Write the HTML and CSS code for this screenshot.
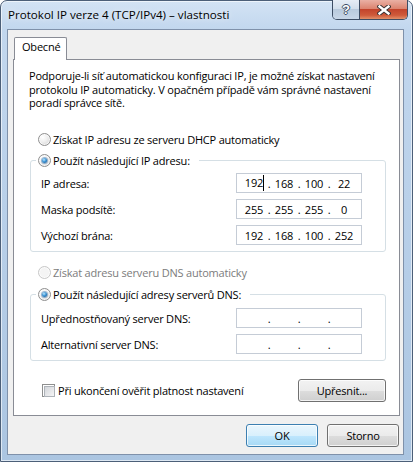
FILE: index.html
```html
<!DOCTYPE html>
<html lang="cs">
<head>
    <meta charset="UTF-8">
    <title>Protokol IP verze 4 (TCP/IPv4) – vlastnosti</title>
    <link rel="stylesheet" href="styles.css">
</head>
<body>
    <div class="window">
        <div class="titlebar">
            <span class="title">Protokol IP verze 4 (TCP/IPv4) – vlastnosti</span>
            <div class="caption">
                <button class="cap help">?</button>
                <button class="cap close">
                    <svg width="14" height="10" viewBox="0 0 14 10">
                        <path d="M2.5 1.5 L11.5 8.5 M11.5 1.5 L2.5 8.5" stroke="#3c3434" stroke-width="4.4" stroke-linecap="square"/>
                        <path d="M2.5 1.5 L11.5 8.5 M11.5 1.5 L2.5 8.5" stroke="#fff" stroke-width="2.4" stroke-linecap="square"/>
                    </svg>
                </button>
            </div>
        </div>

        <div class="client">
            <div class="tab">Obecné</div>
            <div class="panel">
                <p class="intro">Podporuje-li síť automatickou konfiguraci IP, je možné získat nastavení<br>protokolu IP automaticky. V opačném případě vám správné nastavení<br>poradí správce sítě.</p>

                <div class="option"><span class="radio"></span>Získat IP adresu ze serveru DHCP automaticky</div>

                <fieldset class="group">
                    <legend class="option"><span class="radio on"></span>Použít následující IP adresu:</legend>
                    <div class="field">
                        <span class="label">IP adresa:</span>
                        <div class="ipbox"><span>192<i class="caret"></i></span><b>.</b><span>168</span><b>.</b><span>100</span><b>.</b><span>22</span></div>
                    </div>
                    <div class="field">
                        <span class="label">Maska podsítě:</span>
                        <div class="ipbox"><span>255</span><b>.</b><span>255</span><b>.</b><span>255</span><b>.</b><span>0</span></div>
                    </div>
                    <div class="field">
                        <span class="label">Výchozí brána:</span>
                        <div class="ipbox"><span>192</span><b>.</b><span>168</span><b>.</b><span>100</span><b>.</b><span>252</span></div>
                    </div>
                </fieldset>

                <div class="option disabled"><span class="radio"></span>Získat adresu serveru DNS automaticky</div>

                <fieldset class="group dns">
                    <legend class="option"><span class="radio on"></span>Použít následující adresy serverů DNS:</legend>
                    <div class="field">
                        <span class="label">Upřednostňovaný server DNS:</span>
                        <div class="ipbox"><span></span><b>.</b><span></span><b>.</b><span></span><b>.</b><span></span></div>
                    </div>
                    <div class="field">
                        <span class="label">Alternativní server DNS:</span>
                        <div class="ipbox"><span></span><b>.</b><span></span><b>.</b><span></span><b>.</b><span></span></div>
                    </div>
                </fieldset>

                <div class="footer-row">
                    <div class="check"><span class="checkbox"></span>Při ukončení ověřit platnost nastavení</div>
                    <button class="btn wide">Upřesnit...</button>
                </div>
            </div>

            <div class="actions">
                <button class="btn default">OK</button>
                <button class="btn">Storno</button>
            </div>
        </div>
    </div>
</body>
</html>
```

FILE: styles.css
```css
* { box-sizing: border-box; }
body { margin: 0; background: #fff; color: #000; font-family: "Segoe UI", "Open Sans", sans-serif; font-size: 11px; letter-spacing: -0.2px; }

/* window frame */
.window {
    width: 413px;
    height: 462px;
    border: 1px solid #4c5f78;
    border-radius: 7px 7px 0 0;
    background: linear-gradient(180deg, #d3e3f4 0, #c2d7ee 28px, #b5cde7 60%, #abc5e1 100%);
    box-shadow: inset 0 0 0 1px rgba(255, 255, 255, 0.6);
    padding: 0 8px 6px 6px;
    display: flex;
    flex-direction: column;
}
.titlebar { height: 28px; display: flex; justify-content: space-between; align-items: flex-start; margin-right: -4px; }
.title { line-height: 28px; padding-left: 1px; font-size: 11.6px; letter-spacing: 0; text-shadow: 0 0 6px rgba(255, 255, 255, 0.9); }
.caption {
    display: flex;
    margin-top: -1px;
    border: 1px solid #3d4d64;
    border-top: 0;
    border-radius: 0 0 5px 5px;
    overflow: hidden;
}
.cap { border: 0; padding: 0; height: 19px; display: flex; align-items: center; justify-content: center; }
.help {
    width: 27px;
    border-right: 1px solid #3d4d64;
    background: linear-gradient(180deg, #e6edf6 0%, #d3dfec 45%, #b9cadd 50%, #c8d7e8 100%);
    color: #fff;
    font: bold 13px "Liberation Sans", sans-serif;
    text-shadow: 1px 0 #3d4d64, -1px 0 #3d4d64, 0 1px #3d4d64, 0 -1px #3d4d64;
}
.close { width: 47px; background: linear-gradient(180deg, #eab0a4 0%, #dc8470 45%, #c3442c 50%, #cf5a3a 80%, #e2906a 100%); }

.client {
    flex: 1;
    background: #f0f0f0;
    border: 1px solid #7f91aa;
    padding: 7px 0;
    display: flex;
    flex-direction: column;
}

/* tab */
.tab {
    position: relative;
    z-index: 1;
    width: 53px;
    height: 23px;
    margin: 0 0 -1px 6px;
    padding-left: 7px;
    line-height: 18px;
    background: #fff;
    border: 1px solid #898c95;
    border-bottom: 0;
    border-radius: 2px 2px 0 0;
}
.panel { height: 357px; margin: 0 3px 0 5px; border: 1px solid #898c95; background: #fff; }
.intro { margin: 9px 0 21.5px 15px; line-height: 13.5px; }

/* radios / checkbox */
.option { display: flex; align-items: center; gap: 2px; height: 16px; }
.panel > .option { margin-left: 24px; }
.option.disabled { margin-top: 12px; color: #7c7c7c; }
.radio {
    flex: none;
    width: 13px;
    height: 13px;
    border-radius: 50%;
    border: 1px solid #8f8f8f;
    background: radial-gradient(circle at 35% 30%, #fff 0, #f0f0f0 40%, #cdcdcd 100%);
    box-shadow: inset 0 0 0 1px rgba(255, 255, 255, 0.7);
    display: flex;
    align-items: center;
    justify-content: center;
}
.radio.on::after {
    content: "";
    width: 5px;
    height: 5px;
    border-radius: 50%;
    background: radial-gradient(circle at 40% 35%, #bfe8fc 0, #3c94d5 45%, #124d86 100%);
    box-shadow: 0 0 0 1px rgba(40, 100, 160, 0.45);
}
.disabled .radio { border-color: #c8c8c8; background: #f4f4f4; }

.group {
    margin: 5px 13px 0 16px;
    padding: 4px 0 6px 10px;
    border: 1px solid #d5dfe5;
    border-radius: 3px;
    min-width: 0;
}
.group.dns { margin-top: 6px; padding-top: 5px; }
.group legend { height: 17px; margin-left: -5px; padding: 0 9px 0 2px; }

.field { display: flex; align-items: center; height: 20px; }
.field + .field { margin-top: 6px; }
.label { width: 195px; }
.ipbox {
    width: 126px;
    height: 20px;
    border: 1px solid #c5ccd6;
    background: #fff;
    padding-left: 2px;
    display: grid;
    grid-template-columns: 30px 0 30px 0 30px 0 30px;
    align-items: center;
}
.ipbox span { text-align: center; }
.ipbox b { font-weight: normal; display: flex; justify-content: center; }
.caret { display: inline-block; width: 1px; height: 16px; background: #000; vertical-align: -4px; margin-right: -1px; }

.footer-row { display: flex; justify-content: space-between; align-items: center; height: 23px; margin: 18px 13px 0 28px; }
.check { display: flex; align-items: center; gap: 3px; }
.checkbox {
    width: 13px;
    height: 13px;
    border: 1px solid #8e8f8f;
    background: #fff;
    padding: 1px;
}
.checkbox::after {
    content: "";
    display: block;
    width: 9px;
    height: 9px;
    border: 1px solid #aeb3b9;
    background: linear-gradient(135deg, #d3d6db, #f5f5f6);
}

/* buttons */
.btn {
    height: 23px;
    padding: 0;
    border: 1px solid #707070;
    border-radius: 3px;
    background: linear-gradient(180deg, #f2f2f2 0%, #ebebeb 50%, #dddddd 51%, #cfcfcf 100%);
    box-shadow: inset 0 0 0 1px rgba(255, 255, 255, 0.75);
    font: inherit;
    letter-spacing: inherit;
    color: #000;
}
.btn.wide { width: 88px; }
.btn.default {
    border-color: #3c7fb1;
    background: linear-gradient(180deg, #eaf6fd 0%, #d9f0fc 50%, #bee6fd 51%, #a7d9f5 100%);
}
.actions { display: flex; justify-content: flex-end; gap: 9px; margin-top: 8px; padding-right: 4px; }
.actions .btn { width: 72px; }
```
